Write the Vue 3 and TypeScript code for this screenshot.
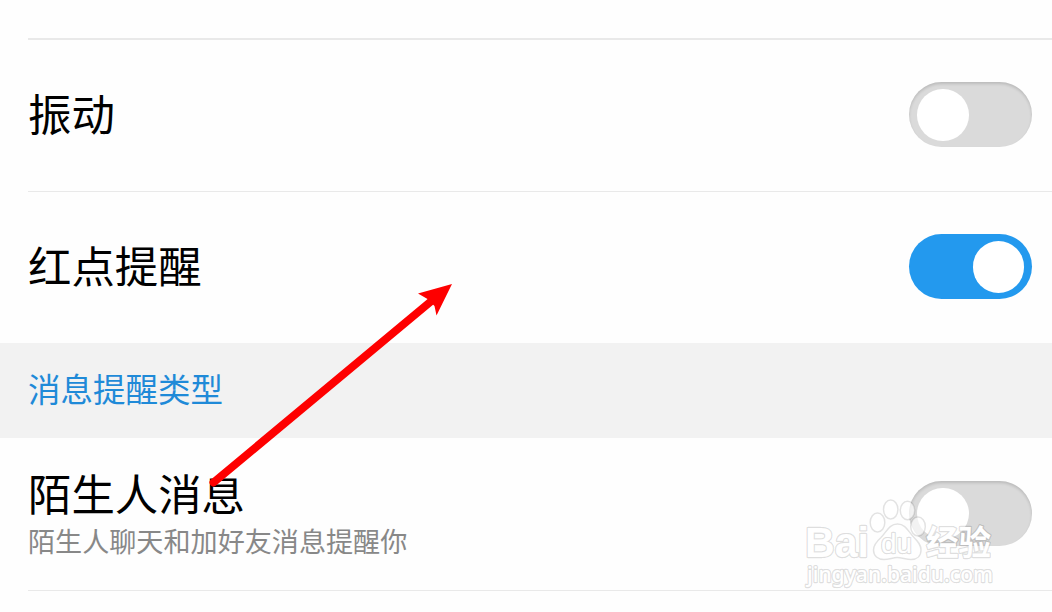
<script setup lang="ts">
interface Setting {
  title: string
  note?: string
  on: boolean
}
const general: Setting[] = [
  { title: '振动', on: false },
  { title: '红点提醒', on: true },
]
const types: Setting[] = [{ title: '陌生人消息', note: '陌生人聊天和加好友消息提醒你', on: false }]
</script>

<template>
  <main class="screen">
    <div class="top"></div>
    <section>
      <div v-for="s in general" :key="s.title" class="row">
        <span class="title">{{ s.title }}</span>
        <span class="switch" :class="{ on: s.on }"><i class="knob"></i></span>
      </div>
    </section>
    <h2 class="group">消息提醒类型</h2>
    <section>
      <div v-for="s in types" :key="s.title" class="row detailed">
        <div class="texts">
          <span class="title">{{ s.title }}</span>
          <span class="note">{{ s.note }}</span>
        </div>
        <span class="switch" :class="{ on: s.on }"><i class="knob"></i></span>
      </div>
    </section>

    <svg class="overlay" viewBox="0 0 1052 612">
      <path d="M213.500 482.500L432 300.500" stroke="#fe0000" stroke-width="8" stroke-linecap="round" />
      <path d="M452 284L418 293.500L427.500 299L434.500 306L436.500 315.500Z" fill="#fe0000" />
      <g class="mark">
        <ellipse cx="877.500" cy="522.500" rx="7.300" ry="9.500" />
        <ellipse cx="890.700" cy="509.500" rx="7.200" ry="9.500" />
        <ellipse cx="907.500" cy="510.500" rx="7.200" ry="9.200" />
        <ellipse cx="918" cy="526.500" rx="7.300" ry="9.500" />
        <path d="M897.500 524C889 524 886.500 532 881 537.500C876 542 873.500 545 873.500 550C873.500 556 878 559.500 884 559.500C889 559.500 893 557.500 897 557.500C902 557.500 906 559.500 911 559.500C917 559.500 921 556 921 550C921 545 918.500 542 914 537.500C908.500 532 906 524 897.500 524Z" />
        <g class="letters">
          <text x="805" y="557" class="latin" textLength="64" lengthAdjust="spacingAndGlyphs">Bai</text>
          <text x="881" y="553" class="du" textLength="31" lengthAdjust="spacingAndGlyphs">du</text>
          <text x="926" y="555" class="cjk" textLength="65" lengthAdjust="spacingAndGlyphs">经验</text>
          <text x="807" y="582" class="site" textLength="186" lengthAdjust="spacingAndGlyphs">jingyan.baidu.com</text>
        </g>
      </g>
    </svg>
  </main>
</template>

<style>
body {
  margin: 0;
  background: #fff;
}
</style>

<style scoped>
.screen {
  position: relative;
  width: 1052px;
  height: 612px;
  overflow: hidden;
  background: #fefefe;
  font-family: "Noto Sans CJK SC", sans-serif;
}
.top {
  height: 38px;
  margin-left: 28px;
  border-bottom: 2px solid #e9e9e9;
}
.row {
  box-sizing: border-box;
  height: 152px;
  margin-left: 28px;
  padding: 0 20px 2px 0;
  display: flex;
  align-items: center;
  justify-content: space-between;
  border-bottom: 1px solid #e9e9e9;
}
section:first-of-type .row:last-child {
  height: 151px;
  border-bottom: 0;
}
.row.detailed {
  height: 153px;
}
.title {
  padding-bottom: 6px;
  font-size: 43.400px;
  line-height: 54px;
  color: #000;
}
.group {
  box-sizing: border-box;
  height: 95px;
  margin: 0;
  padding-left: 28px;
  background: #f2f2f2;
  color: #1f8ad8;
  font-size: 32.500px;
  font-weight: 400;
  line-height: 90px;
}
.texts {
  display: flex;
  flex-direction: column;
}
.texts .title {
  padding-bottom: 2px;
}
.note {
  font-size: 27.100px;
  line-height: 40px;
  color: #888;
}
.switch {
  box-sizing: border-box;
  display: flex;
  width: 123px;
  height: 65px;
  padding: 7px 8px;
  border-radius: 33px;
  background: #dadada;
  box-shadow: inset 0 2px 3px rgba(0, 0, 0, 0.14);
}
.switch.on {
  justify-content: flex-end;
  background: #2399ee;
  box-shadow: none;
}
.knob {
  width: 51.500px;
  height: 51.500px;
  border-radius: 50%;
  background: #fff;
}
.overlay {
  position: absolute;
  inset: 0;
  width: 1052px;
  height: 612px;
}
.mark {
  fill: rgba(255, 255, 255, 0.65);
  stroke: rgba(0, 0, 0, 0.11);
  stroke-width: 1.500px;
  stroke-linejoin: round;
}
.letters {
  fill: #fff;
  stroke: rgba(0, 0, 0, 0.13);
  stroke-width: 2.600px;
  paint-order: stroke;
}
.latin {
  font: 700 43px "Liberation Sans", sans-serif;
}
.du {
  font: 400 28px "Liberation Sans", sans-serif;
}
.cjk {
  font: 700 34px "Noto Sans CJK SC", sans-serif;
}
.site {
  font: 500 22px "Noto Sans", sans-serif;
}
</style>
